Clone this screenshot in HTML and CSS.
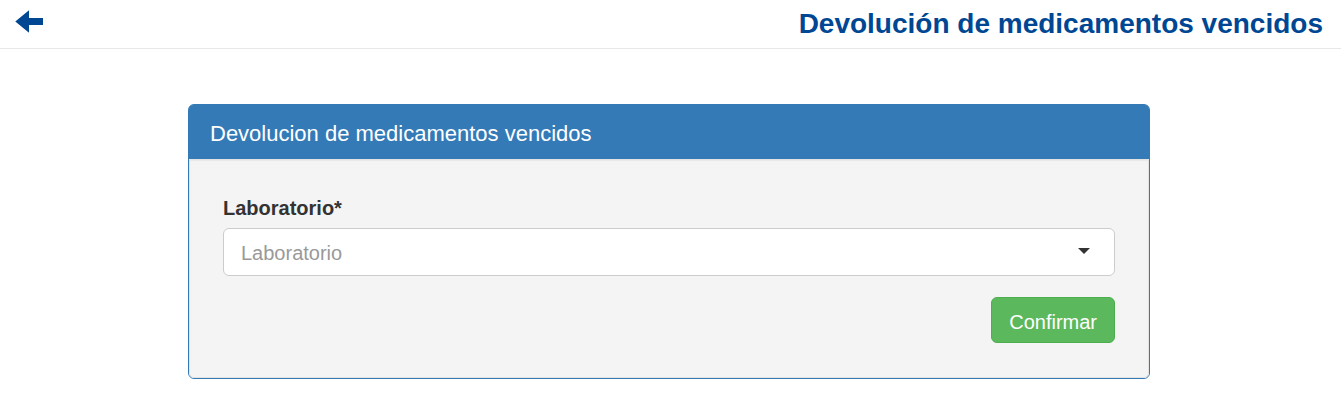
FILE: index.html
```html
<!DOCTYPE html>
<html lang="es">
<head>
<meta charset="utf-8">
<meta name="viewport" content="width=device-width, initial-scale=1">
<title>Devolución de medicamentos vencidos</title>
<link rel="stylesheet" href="styles.css">
</head>
<body>
<header class="topbar">
  <a class="back" href="#" aria-label="Volver">
    <svg class="back-icon" viewBox="0 0 28 24" aria-hidden="true"><path d="M.3 11.500 14 .3V8H28V15H14V22.700z" fill="#004793"/></svg>
  </a>
  <h1 class="page-title">Devolución de medicamentos vencidos</h1>
</header>
<main class="content">
  <section class="panel">
    <h2 class="panel-heading">Devolucion de medicamentos vencidos</h2>
    <form class="well">
      <label class="field-label" for="laboratorio">Laboratorio*</label>
      <div class="select-wrap">
        <select class="select" id="laboratorio" required>
          <option value="">Laboratorio</option>
        </select>
        <svg class="caret" viewBox="0 0 12 6" aria-hidden="true"><path d="M0 0h12L6 6z" fill="#333"/></svg>
      </div>
      <div class="actions">
        <button class="button" type="submit">Confirmar</button>
      </div>
    </form>
  </section>
</main>
</body>
</html>
```
FILE: styles.css
```css
* {
  box-sizing: border-box;
}

body {
  margin: 0;
  background: #fff;
  color: #333;
  font-family: "Liberation Sans", Arial, sans-serif;
  font-size: 20px;
  line-height: 28px;
}

.topbar {
  display: flex;
  align-items: center;
  justify-content: space-between;
  padding: 4px 18px 4px 15px;
  border-bottom: 1px solid #e7e7e7;
}

.back {
  display: flex;
  padding-bottom: 4px;
}

.back-icon {
  width: 28px;
  height: 24px;
}

.page-title {
  margin: 0;
  color: #004793;
  font-size: 28px;
  line-height: 40px;
}

.content {
  padding: 55px 191px 31px 188px;
}

.panel {
  border: 1px solid #337ab7;
  border-radius: 6px;
  background: #fff;
}

.panel-heading {
  margin: 0;
  padding: 15px 21px 11px;
  border-radius: 4px 4px 0 0;
  background: #337ab7;
  color: #fff;
  font-size: 22px;
  font-weight: 400;
  line-height: 28px;
}

.well {
  padding: 34px 33px;
  border: 1px solid #e3e3e3;
  border-radius: 0 0 5px 5px;
  background: #f4f4f4;
  box-shadow: inset 0 1px 1px rgba(0, 0, 0, 0.05);
}

.field-label {
  display: block;
  margin-bottom: 6px;
  font-weight: 700;
}

.select-wrap {
  display: grid;
  align-items: center;
}

.select,
.caret {
  grid-area: 1 / 1;
}

.select {
  width: 100%;
  height: 48px;
  padding: 2px 50px 0 17px;
  appearance: none;
  border: 1px solid #ccc;
  border-radius: 6px;
  background: #fff;
  color: #999;
  font: inherit;
}

.caret {
  justify-self: end;
  width: 12px;
  height: 6px;
  margin: 0 25px 2px 0;
  pointer-events: none;
}

.actions {
  display: flex;
  justify-content: flex-end;
  margin-top: 21px;
}

.button {
  padding: 11px 17px 7px;
  border: 1px solid #4cae4c;
  border-radius: 6px;
  background: #5cb85c;
  color: #fff;
  font: inherit;
  line-height: 26px;
}
```
